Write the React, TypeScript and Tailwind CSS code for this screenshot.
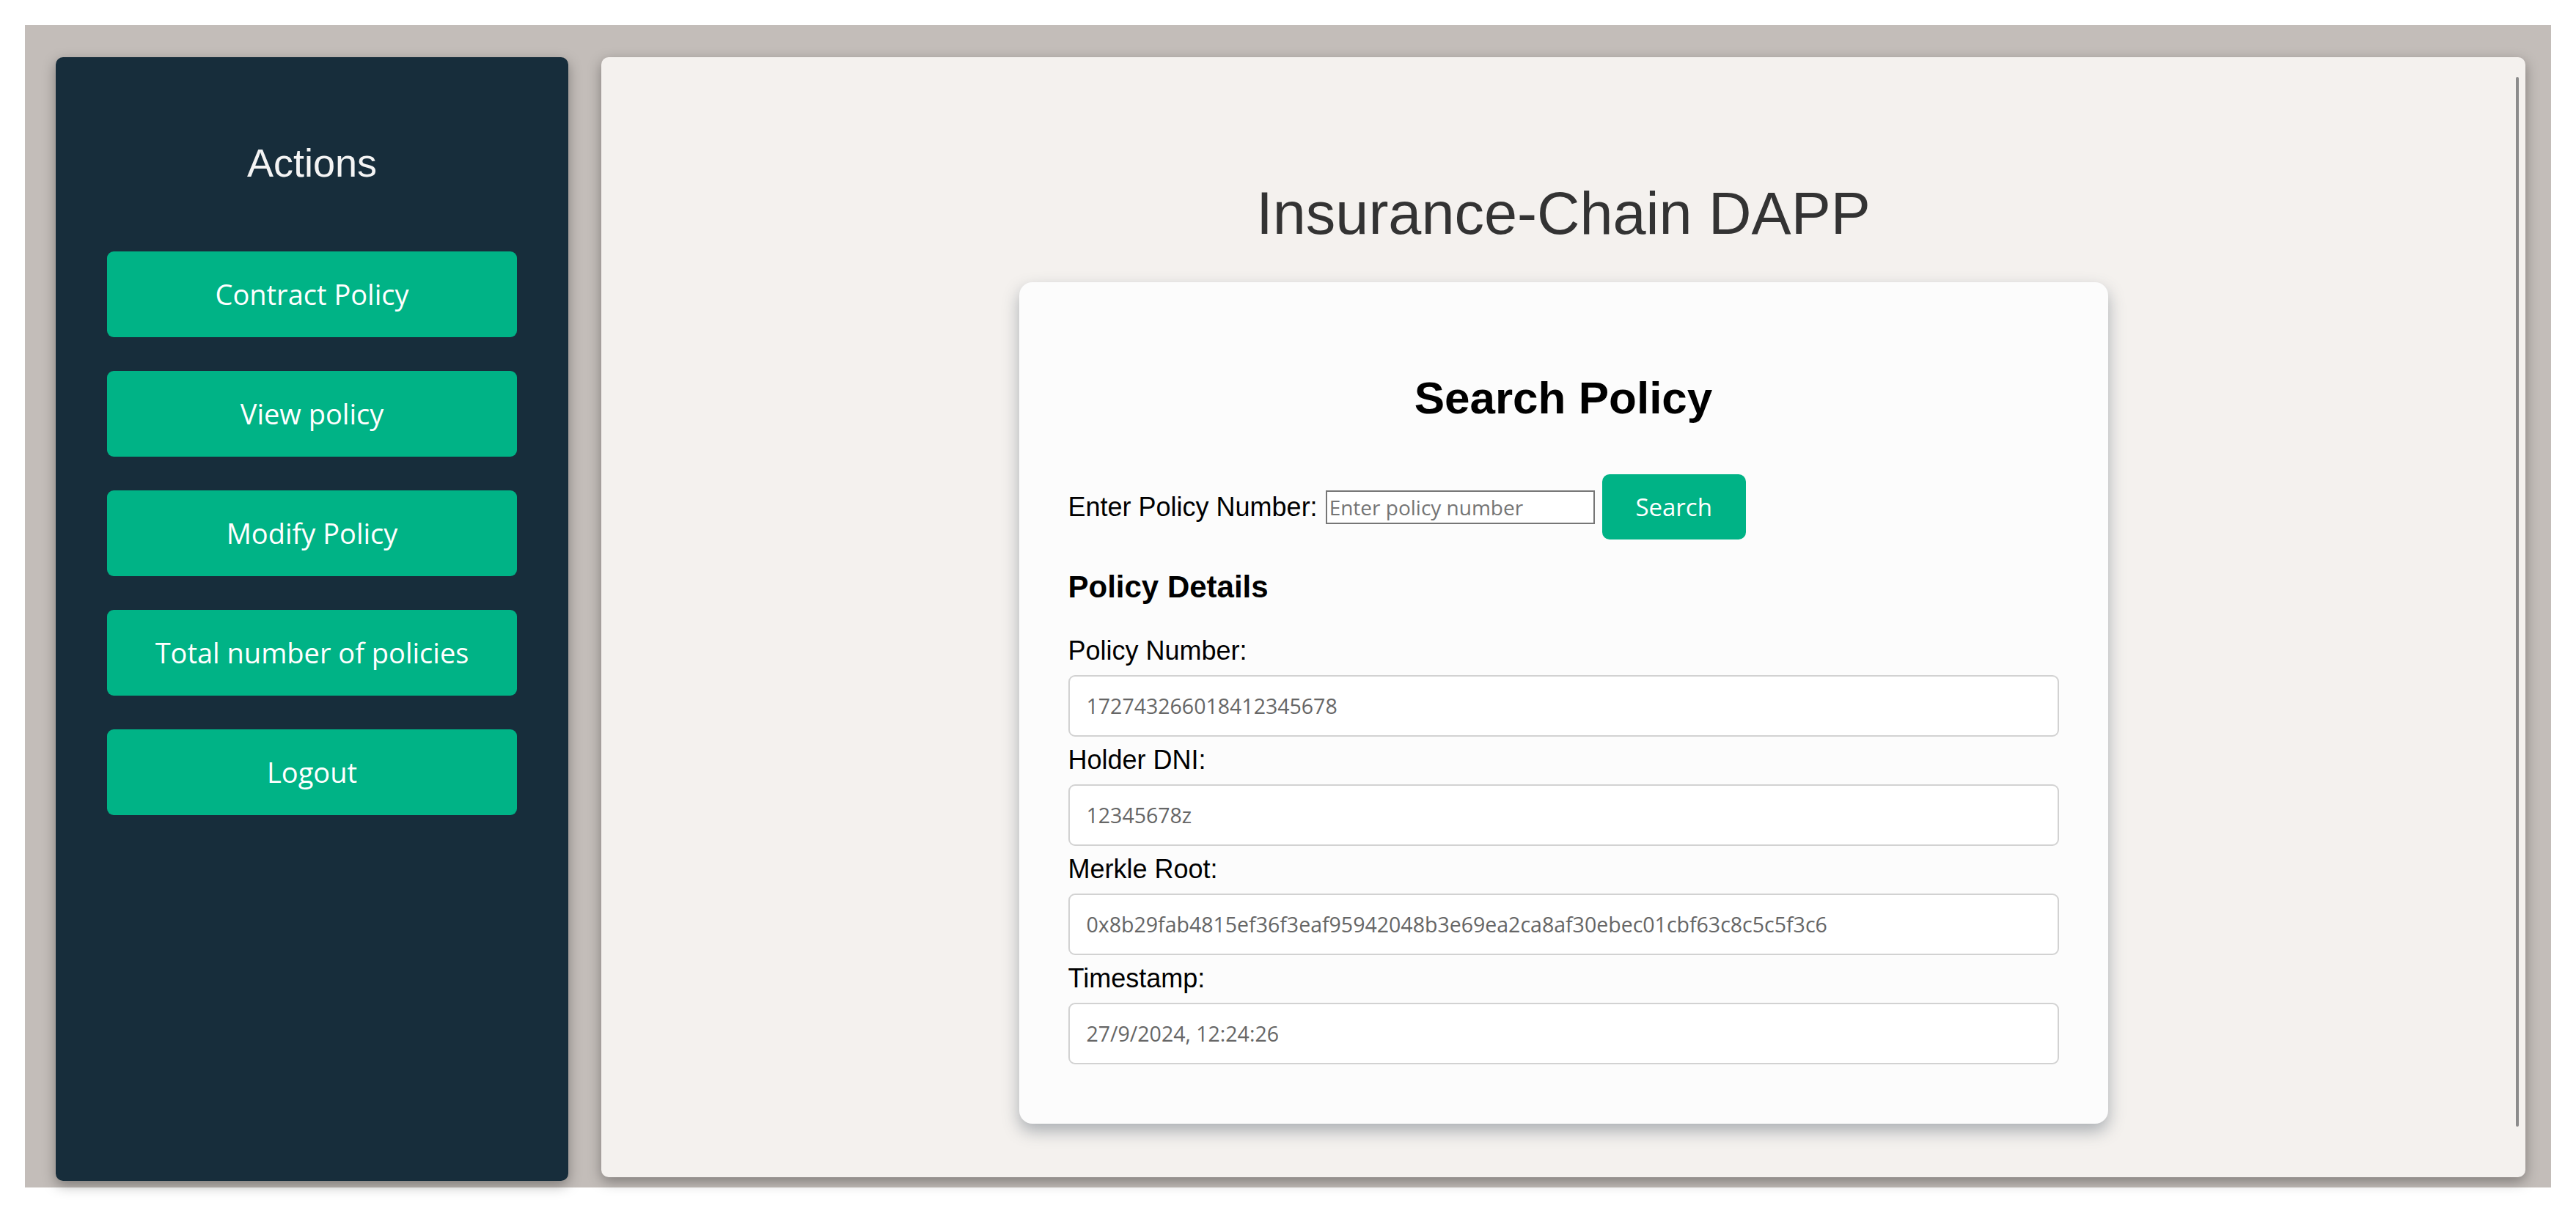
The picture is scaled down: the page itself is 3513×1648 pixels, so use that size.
const sans = { fontFamily: '"Liberation Sans", Arial, sans-serif' };

const menu = ["Contract Policy", "View policy", "Modify Policy", "Total number of policies", "Logout"];

const details = [
  { label: "Policy Number:", value: "172743266018412345678" },
  { label: "Holder DNI:", value: "12345678z" },
  { label: "Merkle Root:", value: "0x8b29fab4815ef36f3eaf95942048b3e69ea2ca8af30ebec01cbf63c8c5c5f3c6" },
  { label: "Timestamp:", value: "27/9/2024, 12:24:26" },
];

function Sidebar() {
  return (
    <aside className="flex h-[1533px] w-[699px] shrink-0 flex-col items-center rounded-[10px] bg-[#172d3b] px-[70px] pt-[113px] shadow-[0_6px_18px_rgba(0,0,0,0.35)]">
      <h2 className="text-[54px] leading-[62px] text-[#f4f4f4]" style={sans}>
        Actions
      </h2>
      <div className="mt-[90px] flex w-full flex-col gap-[46px]">
        {menu.map((item) => (
          <button
            key={item}
            className="h-[117px] w-full rounded-[9px] bg-[#00b386] text-[38px] text-white font-['Segoe_UI','Open_Sans',sans-serif]"
          >
            {item}
          </button>
        ))}
      </div>
    </aside>
  );
}

function PolicyCard() {
  return (
    <div className="w-[1485px] rounded-[18px] bg-[#fcfcfc] px-[67px] pt-[122px] pb-[70px] shadow-[0_10px_22px_rgba(60,75,90,0.4)]" style={sans}>
      <h2 className="text-center text-[62px] font-bold leading-[72px] text-black">Search Policy</h2>

      <div className="mt-[68px] flex h-[89px] items-center text-[36px] text-black">
        <span>Enter Policy Number:</span>
        <input
          placeholder="Enter policy number"
          className="ml-[11px] h-[46px] w-[367px] border-2 border-[#767676] bg-white px-[3px] text-[28px] placeholder:text-[#757575] font-['Segoe_UI','Open_Sans',sans-serif]"
        />
        <button className="ml-[10px] h-[89px] w-[196px] rounded-[10px] bg-[#00b386] text-[33px] text-white font-['Segoe_UI','Open_Sans',sans-serif]">
          Search
        </button>
      </div>

      <h3 className="mt-[41px] text-[42px] font-bold leading-[48px] text-black">Policy Details</h3>

      <div className="mt-[42px] flex flex-col">
        {details.map((d) => (
          <div key={d.label} className="mb-[11px] flex flex-col">
            <label className="mb-[13px] text-[36px] leading-[41px] text-black">{d.label}</label>
            <input
              readOnly
              value={d.value}
              className="h-[84px] w-full rounded-[9px] border-2 border-[#d2d2d2] bg-white px-[23px] text-[28.5px] text-[#666] font-['Segoe_UI','Open_Sans',sans-serif]"
            />
          </div>
        ))}
      </div>
    </div>
  );
}

export default function App() {
  return (
    <div className="h-[1648px] w-[3513px] bg-white pt-[34px] pl-[34px]">
      <div className="flex h-[1586px] w-[3445px] items-start gap-[45px] bg-[#c3bdb9] pt-[44px] pl-[42px]">
        <Sidebar />
        <main className="relative flex h-[1528px] w-[2624px] flex-col items-center rounded-[10px] bg-[#f4f1ee] shadow-[0_6px_18px_rgba(0,0,0,0.35)]">
          <h1 className="mt-[167px] text-[81px] leading-[92px] text-[#333]" style={sans}>
            Insurance-Chain DAPP
          </h1>
          <div className="mt-[48px]">
            <PolicyCard />
          </div>
          <div className="absolute top-[27px] right-[9px] bottom-[69px] w-[4px] rounded-full bg-[#8c8c8c]" />
        </main>
      </div>
    </div>
  );
}
